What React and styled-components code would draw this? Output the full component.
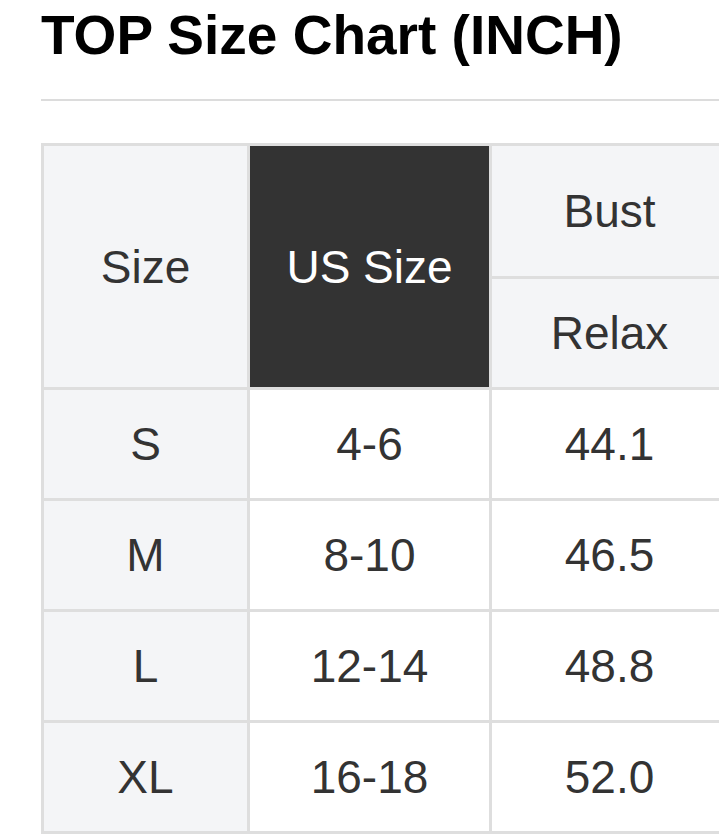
import React from 'react';
import styled, { createGlobalStyle } from 'styled-components';

const GlobalStyle = createGlobalStyle`
  html, body {
    margin: 0;
    padding: 0;
    background: #fff;
    overflow: hidden;
  }
`;

const Page = styled.div`
  padding-left: 41px;
  font-family: "Liberation Sans", Arial, sans-serif;
  color: #333;
`;

const Title = styled.h1`
  margin: 4px 0 0 0;
  font-size: 55px;
  line-height: 62px;
  font-weight: bold;
  color: #000;
  white-space: nowrap;
`;

const Rule = styled.div`
  height: 2px;
  margin-top: 33px;
  background: #dcdcdc;
`;

const Table = styled.table`
  margin-top: 42px;
  width: 689px;
  min-width: 689px;
  border-collapse: collapse;
  table-layout: fixed;
  border: 3px solid #dedede;
  font-size: 46px;
`;

const Cell = styled.td`
  border: 3px solid #dedede;
  padding: 0;
  text-align: center;
  vertical-align: middle;
  height: ${(p) => p.h || 108}px;
  background: ${(p) => (p.dark ? '#333' : p.shade ? '#f4f5f7' : '#fff')};
  color: ${(p) => (p.dark ? '#fff' : '#333')};
  font-weight: normal;
`;

const rows = [
  ['S', '4-6', '44.1'],
  ['M', '8-10', '46.5'],
  ['L', '12-14', '48.8'],
  ['XL', '16-18', '52.0'],
];

const App = () => (
  <Page>
    <GlobalStyle />
    <Title>TOP Size Chart (INCH)</Title>
    <Rule />
    <Table>
      <colgroup>
        <col style={{ width: 206 }} />
        <col style={{ width: 242 }} />
        <col style={{ width: 238 }} />
      </colgroup>
      <thead>
        <tr>
          <Cell as="th" rowSpan={2} shade>Size</Cell>
          <Cell as="th" rowSpan={2} dark>US Size</Cell>
          <Cell as="th" shade h={130}>Bust</Cell>
        </tr>
        <tr>
          <Cell as="th" shade>Relax</Cell>
        </tr>
      </thead>
      <tbody>
        {rows.map((r) => (
          <tr key={r[0]}>
            <Cell shade>{r[0]}</Cell>
            <Cell>{r[1]}</Cell>
            <Cell>{r[2]}</Cell>
          </tr>
        ))}
      </tbody>
    </Table>
  </Page>
);

export default App;
